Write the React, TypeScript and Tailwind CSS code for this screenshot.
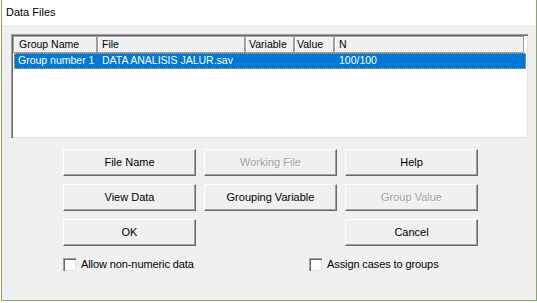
import React from "react";

const font = { fontFamily: '"Liberation Sans", Arial, sans-serif' };

function Btn({ label, disabled }: { label: string; disabled?: boolean }) {
  return (
    <div className="w-[133px] h-[27px] bg-[#f0f0f0] border-t border-l border-white border-r border-b border-r-[#696969] border-b-[#696969] shadow-[inset_-1px_-1px_0_#a0a0a0] flex items-center justify-center">
      <span
        className={
          disabled
            ? "text-[11px] text-[#a0a0a0] [text-shadow:1px_1px_0_#ffffff]"
            : "text-[11px] text-black"
        }
      >
        {label}
      </span>
    </div>
  );
}

function Check({ label }: { label: string }) {
  return (
    <div className="flex items-center gap-[5px]">
      <div className="w-[13px] h-[13px] bg-white border-t border-l border-[#a0a0a0] border-r-white border-b-white shadow-[inset_1px_1px_0_#696969,inset_-1px_-1px_0_#e3e3e3]" />
      <span className="text-[11px] text-black leading-[13px] tracking-[-0.1px]">{label}</span>
    </div>
  );
}

function HeadCell({ w, label, pl }: { w: string; label: string; pl: string }) {
  return (
    <div
      className={`${w} ${pl} h-[17px] bg-[#f0f0f0] border border-[#a0a0a0] shadow-[inset_1px_1px_0_#ffffff] flex items-center text-[10.5px] text-black overflow-hidden whitespace-nowrap`}
    >
      {label}
    </div>
  );
}

export default function App() {
  return (
    <div className="w-[537px] h-[303px] bg-white" style={font}>
      <div className="ml-px w-[536px] h-[301px] border-l border-r border-b border-[#86ab5a] flex flex-col">
        <div className="h-[25px] bg-white flex items-center pl-[4px]">
          <span className="text-[11px] text-black">Data Files</span>
        </div>
        <div className="flex-1 bg-[#f0f0f0] pt-[9px] pl-[9px] flex flex-col">
          <div className="w-[517px] h-[104px] border-t border-l border-[#a0a0a0] border-r-white border-b-white bg-white shadow-[inset_1px_1px_0_#696969,inset_-1px_-1px_0_#e3e3e3] p-px">
            <div className="flex">
              <HeadCell w="w-[84px]" pl="pl-[5px]" label="Group Name" />
              <HeadCell w="w-[148px]" pl="pl-[4px]" label="File" />
              <HeadCell w="w-[49px]" pl="pl-[3px]" label="Variable" />
              <HeadCell w="w-[40px]" pl="pl-[2px]" label="Value" />
              <HeadCell w="w-[190px]" pl="pl-[4px]" label="N" />
            </div>
            <div className="mx-px h-[16px] bg-[#0078d7] border border-dotted border-[#e8a040] flex items-center text-[10.5px] text-white whitespace-nowrap">
              <div className="w-[83px] pl-[3px]">Group number 1</div>
              <div className="w-[237px] pl-[4px]">DATA ANALISIS JALUR.sav</div>
              <div className="pl-[4px]">100/100</div>
            </div>
          </div>
          <div className="ml-[52px] mt-[11px] grid grid-cols-[133px_133px_133px] gap-x-[8px] gap-y-[8px]">
            <Btn label="File Name" />
            <Btn label="Working File" disabled />
            <Btn label="Help" />
            <Btn label="View Data" />
            <Btn label="Grouping Variable" />
            <Btn label="Group Value" disabled />
            <Btn label="OK" />
            <div />
            <Btn label="Cancel" />
          </div>
          <div className="ml-[52px] mt-[12px] flex">
            <div className="w-[246px]">
              <Check label="Allow non-numeric data" />
            </div>
            <Check label="Assign cases to groups" />
          </div>
        </div>
      </div>
    </div>
  );
}
